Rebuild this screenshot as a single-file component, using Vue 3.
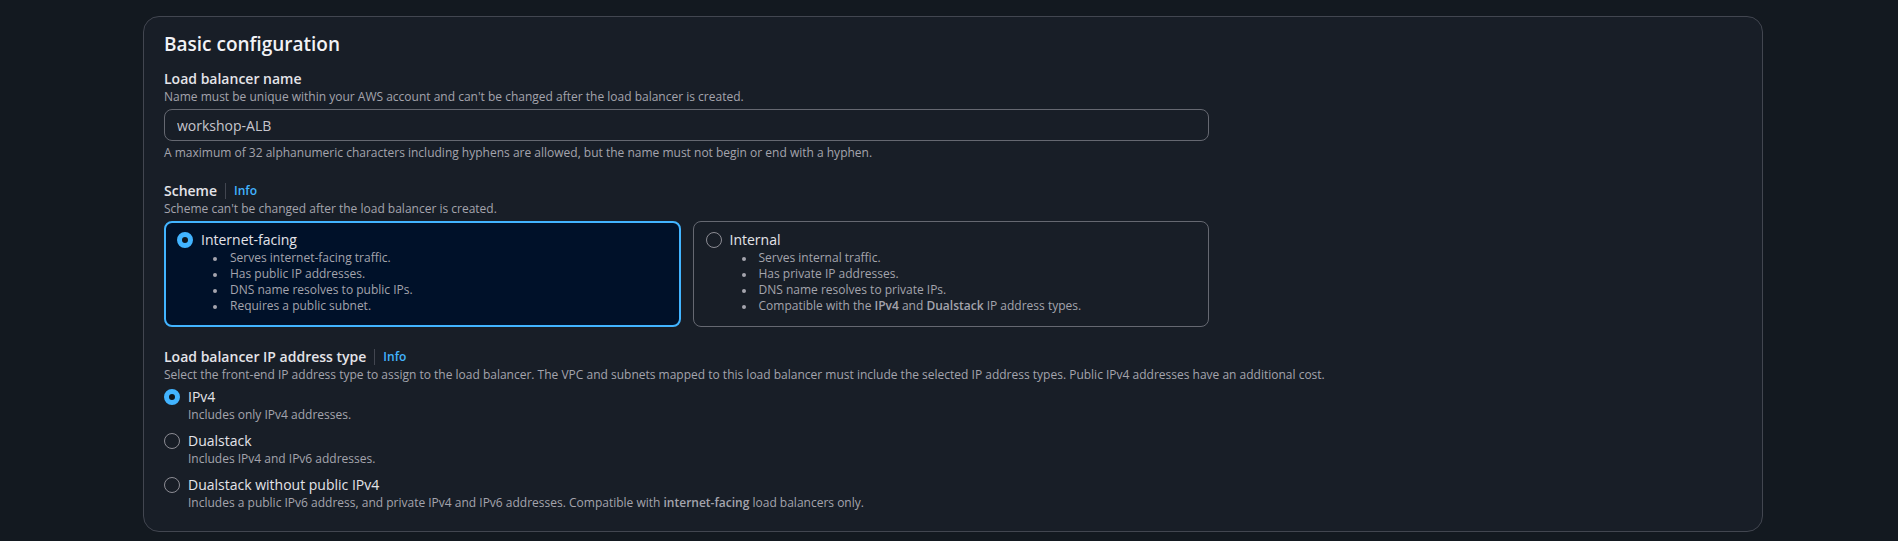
<script setup>
import { ref } from 'vue'

const name = ref('workshop-ALB')
const scheme = ref('internet-facing')
const ipType = ref('ipv4')

const schemes = [
  {
    value: 'internet-facing',
    label: 'Internet-facing',
    points: [
      [{ text: 'Serves internet-facing traffic.' }],
      [{ text: 'Has public IP addresses.' }],
      [{ text: 'DNS name resolves to public IPs.' }],
      [{ text: 'Requires a public subnet.' }],
    ],
  },
  {
    value: 'internal',
    label: 'Internal',
    points: [
      [{ text: 'Serves internal traffic.' }],
      [{ text: 'Has private IP addresses.' }],
      [{ text: 'DNS name resolves to private IPs.' }],
      [
        { text: 'Compatible with the ' },
        { text: 'IPv4', strong: true },
        { text: ' and ' },
        { text: 'Dualstack', strong: true },
        { text: ' IP address types.' },
      ],
    ],
  },
]

const ipTypes = [
  { value: 'ipv4', label: 'IPv4', parts: [{ text: 'Includes only IPv4 addresses.' }] },
  { value: 'dualstack', label: 'Dualstack', parts: [{ text: 'Includes IPv4 and IPv6 addresses.' }] },
  {
    value: 'dualstack-private',
    label: 'Dualstack without public IPv4',
    parts: [
      { text: 'Includes a public IPv6 address, and private IPv4 and IPv6 addresses. Compatible with ' },
      { text: 'internet-facing', strong: true },
      { text: ' load balancers only.' },
    ],
  },
]
</script>

<template>
  <main class="page">
    <section class="card" aria-labelledby="card-title">
      <h2 id="card-title" class="title">Basic configuration</h2>

      <div class="field">
        <label class="label" for="lb-name">Load balancer name</label>
        <p id="name-desc" class="hint">Name must be unique within your AWS account and can't be changed after the load balancer is created.</p>
        <input id="lb-name" v-model="name" class="text-input" type="text" aria-describedby="name-desc name-rule" />
        <p id="name-rule" class="hint">A maximum of 32 alphanumeric characters including hyphens are allowed, but the name must not begin or end with a hyphen.</p>
      </div>

      <div class="field" role="radiogroup" aria-labelledby="scheme-label">
        <div class="label-row">
          <span id="scheme-label" class="label">Scheme</span>
          <a class="info" href="#scheme">Info</a>
        </div>
        <p class="hint">Scheme can't be changed after the load balancer is created.</p>
        <div class="tiles">
          <div v-for="s in schemes" :key="s.value" class="tile" :class="{ selected: scheme === s.value }">
            <input :id="s.value" v-model="scheme" class="radio" type="radio" name="scheme" :value="s.value" />
            <div class="option-body">
              <label class="option-label" :for="s.value">{{ s.label }}</label>
              <ul class="points">
                <li v-for="(point, i) in s.points" :key="i"><component :is="part.strong ? 'b' : 'span'" v-for="(part, j) in point" :key="j">{{ part.text }}</component></li>
              </ul>
            </div>
          </div>
        </div>
      </div>

      <div class="field" role="radiogroup" aria-labelledby="ip-label">
        <div class="label-row">
          <span id="ip-label" class="label">Load balancer IP address type</span>
          <a class="info" href="#ip-type">Info</a>
        </div>
        <p class="hint">Select the front-end IP address type to assign to the load balancer. The VPC and subnets mapped to this load balancer must include the selected IP address types. Public IPv4 addresses have an additional cost.</p>
        <div class="options">
          <div v-for="t in ipTypes" :key="t.value" class="option">
            <input :id="t.value" v-model="ipType" class="radio" type="radio" name="ip-type" :value="t.value" />
            <div class="option-body">
              <label class="option-label" :for="t.value">{{ t.label }}</label>
              <p class="hint"><component :is="part.strong ? 'b' : 'span'" v-for="(part, j) in t.parts" :key="j">{{ part.text }}</component></p>
            </div>
          </div>
        </div>
      </div>
    </section>
  </main>
</template>

<style>
body {
  margin: 0;
  background: #131920;
}
</style>

<style scoped>
.page {
  padding: 16px 135px 8px 143px;
  font-family: "Open Sans", "Noto Sans", sans-serif;
  font-size: 14px;
  line-height: 20px;
  color: #e4e4e9;
}
.card {
  display: flex;
  flex-direction: column;
  gap: 20px;
  padding: 15px 20px 20px;
  border: 1px solid #424650;
  border-radius: 16px;
  background: #181e27;
}
.title {
  margin: 0 0 -7px;
  font-size: 19px;
  line-height: 24px;
  font-weight: 600;
  color: #f2f2f6;
}
.field {
  display: flex;
  flex-direction: column;
}
.label {
  font-weight: 600;
}
.label-row {
  display: flex;
  align-items: center;
  gap: 8px;
}
.info {
  padding-left: 8px;
  border-left: 1px solid #424650;
  font-size: 12px;
  line-height: 16px;
  font-weight: 600;
  color: #42b4ff;
  text-decoration: none;
}
.hint {
  margin: 0;
  font-size: 12px;
  line-height: 16px;
  color: #a4a4ad;
}
b {
  font-weight: 600;
}
.text-input {
  box-sizing: border-box;
  width: 100%;
  max-width: 1045px;
  height: 32px;
  margin: 4px 0;
  padding: 4px 12px;
  border: 1px solid #656871;
  border-radius: 8px;
  background: #181e27;
  color: #c6c6cd;
  font: inherit;
}
.tiles {
  display: grid;
  grid-template-columns: 1fr 1fr;
  gap: 12px;
  max-width: 1045px;
  margin-top: 4px;
}
.tile {
  display: flex;
  gap: 8px;
  padding: 8px 12px 12px;
  border: 1px solid #656871;
  border-radius: 8px;
}
.tile.selected {
  padding: 7px 11px 11px;
  border: 2px solid #42b4ff;
  background: #001129;
}
.radio {
  appearance: none;
  box-sizing: border-box;
  flex: none;
  width: 16px;
  height: 16px;
  margin: 2px 0;
  border: 1px solid #8c8c94;
  border-radius: 50%;
}
.radio:checked {
  border: 5px solid #42b4ff;
  background: #0f141a;
}
.option-body {
  display: flex;
  flex-direction: column;
}
.points {
  margin: 0;
  padding-left: 29px;
  list-style: none;
  font-size: 12px;
  line-height: 16px;
  color: #a4a4ad;
}
.points li::before {
  content: "";
  display: inline-block;
  width: 4px;
  height: 4px;
  margin: 0 13px 0 -17px;
  border-radius: 50%;
  background: currentColor;
  vertical-align: middle;
}
.options {
  display: flex;
  flex-direction: column;
  gap: 8px;
  margin-top: 4px;
}
.option {
  display: flex;
  gap: 8px;
}
</style>
